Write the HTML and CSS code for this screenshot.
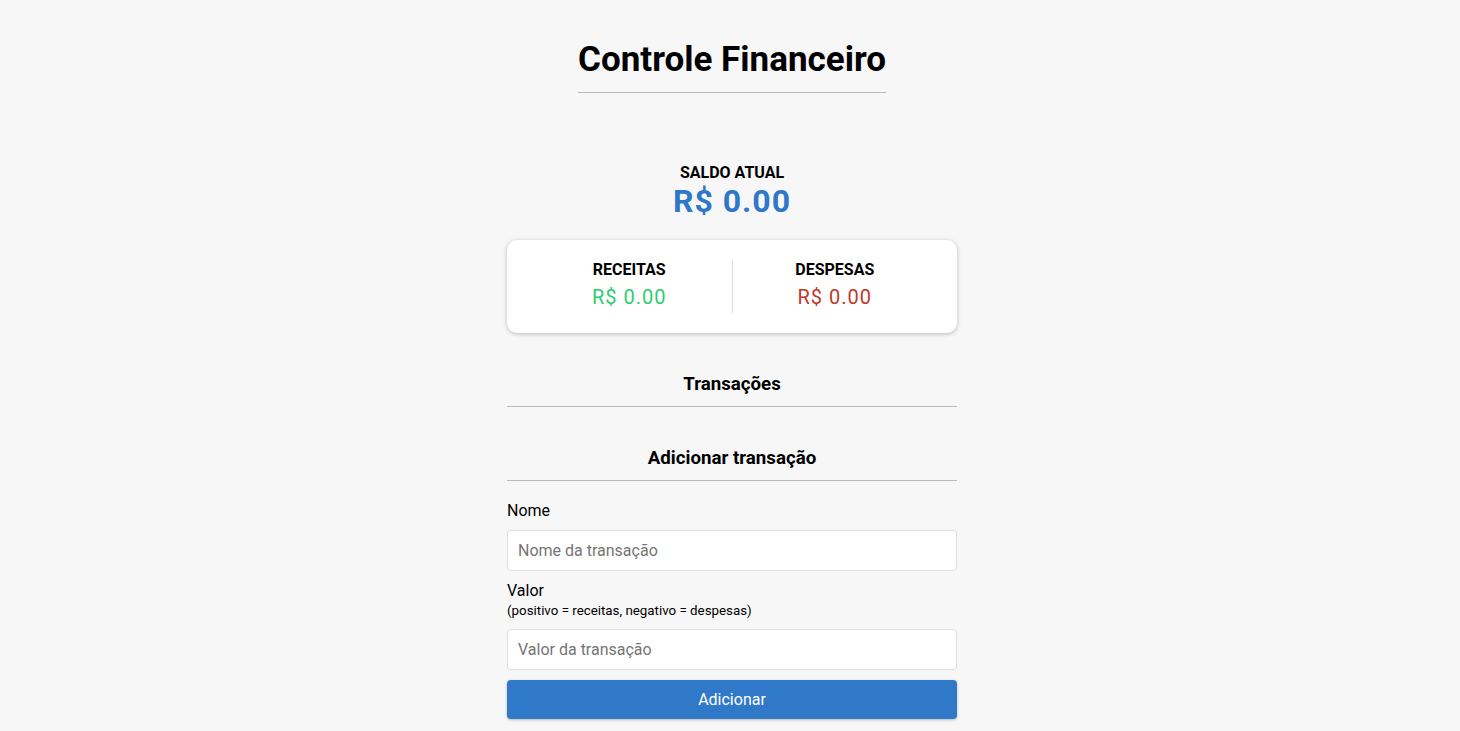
FILE: index.html
```html
<!DOCTYPE html>
<html lang="pt-BR">
<head>
<meta charset="utf-8">
<title>Controle Financeiro</title>
<link rel="stylesheet" href="styles.css">
</head>
<body>
  <header class="header">
    <h1 class="title">Controle Financeiro</h1>
  </header>
  <main class="container">
    <section class="balance">
      <h4 class="balance-label">SALDO ATUAL</h4>
      <p class="balance-value">R$ 0.00</p>
    </section>
    <section class="inc-exp">
      <div class="inc-exp-col">
        <h4 class="inc-exp-label">RECEITAS</h4>
        <p class="money plus">R$ 0.00</p>
      </div>
      <div class="inc-exp-col">
        <h4 class="inc-exp-label">DESPESAS</h4>
        <p class="money minus">R$ 0.00</p>
      </div>
    </section>
    <h3 class="section-title">Transações</h3>
    <ul class="list"></ul>
    <h3 class="section-title">Adicionar transação</h3>
    <form class="form">
      <div class="form-control">
        <label class="label" for="text">Nome</label>
        <input class="input" type="text" id="text" placeholder="Nome da transação">
      </div>
      <div class="form-control">
        <label class="label" for="amount">Valor <br><small class="hint">(positivo = receitas, negativo = despesas)</small></label>
        <input class="input" type="number" id="amount" placeholder="Valor da transação">
      </div>
      <button class="btn" type="button">Adicionar</button>
    </form>
  </main>
</body>
</html>
```
FILE: styles.css
```css
* { box-sizing: border-box; }
html, body { height: 100%; }
body {
  margin: 0;
  padding-left: 4px;
  background: #f7f7f7;
  font-family: Roboto, "Liberation Sans", sans-serif;
  color: #000;
  display: flex;
  flex-direction: column;
  align-items: center;
  overflow: hidden;
}
.header { display: flex; justify-content: center; padding-top: 39px; }
.title {
  margin: 0;
  font-size: 35px;
  font-weight: 700;
  line-height: 41px;
  padding-bottom: 12px;
  border-bottom: 1px solid #bbb;
}
.container {
  width: 450px;
  display: flex;
  flex-direction: column;
  margin-top: 70px;
}
.balance { text-align: center; }
.balance-label {
  margin: 0;
  font-size: 16px;
  font-weight: 700;
  line-height: 19px;
}
.balance-value {
  margin: 0;
  font-size: 32px;
  font-weight: 700;
  line-height: 38px;
  color: #2f78c9;
  letter-spacing: 1px;
}
.inc-exp {
  margin-top: 20px;
  background: #fff;
  border-radius: 10px;
  box-shadow: 0 1px 4px rgba(0,0,0,0.25);
  padding: 20px;
  display: flex;
}
.inc-exp-col {
  flex: 1;
  text-align: center;
}
.inc-exp-col + .inc-exp-col { border-left: 1px solid #ddd; }
.inc-exp-label {
  margin: 0;
  font-size: 16px;
  font-weight: 700;
  line-height: 19px;
}
.money {
  margin: 6px 0 0;
  font-size: 20px;
  line-height: 24px;
  letter-spacing: 1px;
  padding-bottom: 4px;
}
.plus { color: #2ecc71; }
.minus { color: #c0392b; }
.section-title {
  margin: 40px 0 0;
  font-size: 18.72px;
  font-weight: 700;
  line-height: 22px;
  text-align: center;
  padding-bottom: 11px;
  border-bottom: 1px solid #bbb;
}
.list { margin: 0; padding: 0; list-style: none; height: 0; }
.list + .section-title { margin-top: 40px; }
.form { display: flex; flex-direction: column; }
.form-control { display: flex; flex-direction: column; margin-top: 20px; }
.form-control + .form-control { margin-top: 10px; }
.label { font-size: 16px; line-height: 19px; margin-bottom: 10px; }
.hint { font-size: 13.33px; line-height: 14px; display: inline-block; margin-top: 1px; }
.input {
  width: 100%;
  height: 41px;
  border: 1px solid #dedede;
  border-radius: 4px;
  background: #fff;
  padding: 0 10px;
  font-family: Roboto, "Liberation Sans", sans-serif;
  font-size: 16px;
  color: #333;
}
.input::placeholder { color: #757575; }
.btn {
  margin-top: 10px;
  height: 39px;
  width: 100%;
  border: 0;
  border-radius: 4px;
  background: #3079c9;
  color: #fff;
  font-family: Roboto, "Liberation Sans", sans-serif;
  font-size: 16px;
  box-shadow: 0 1px 3px rgba(0,0,0,0.25);
}
```
